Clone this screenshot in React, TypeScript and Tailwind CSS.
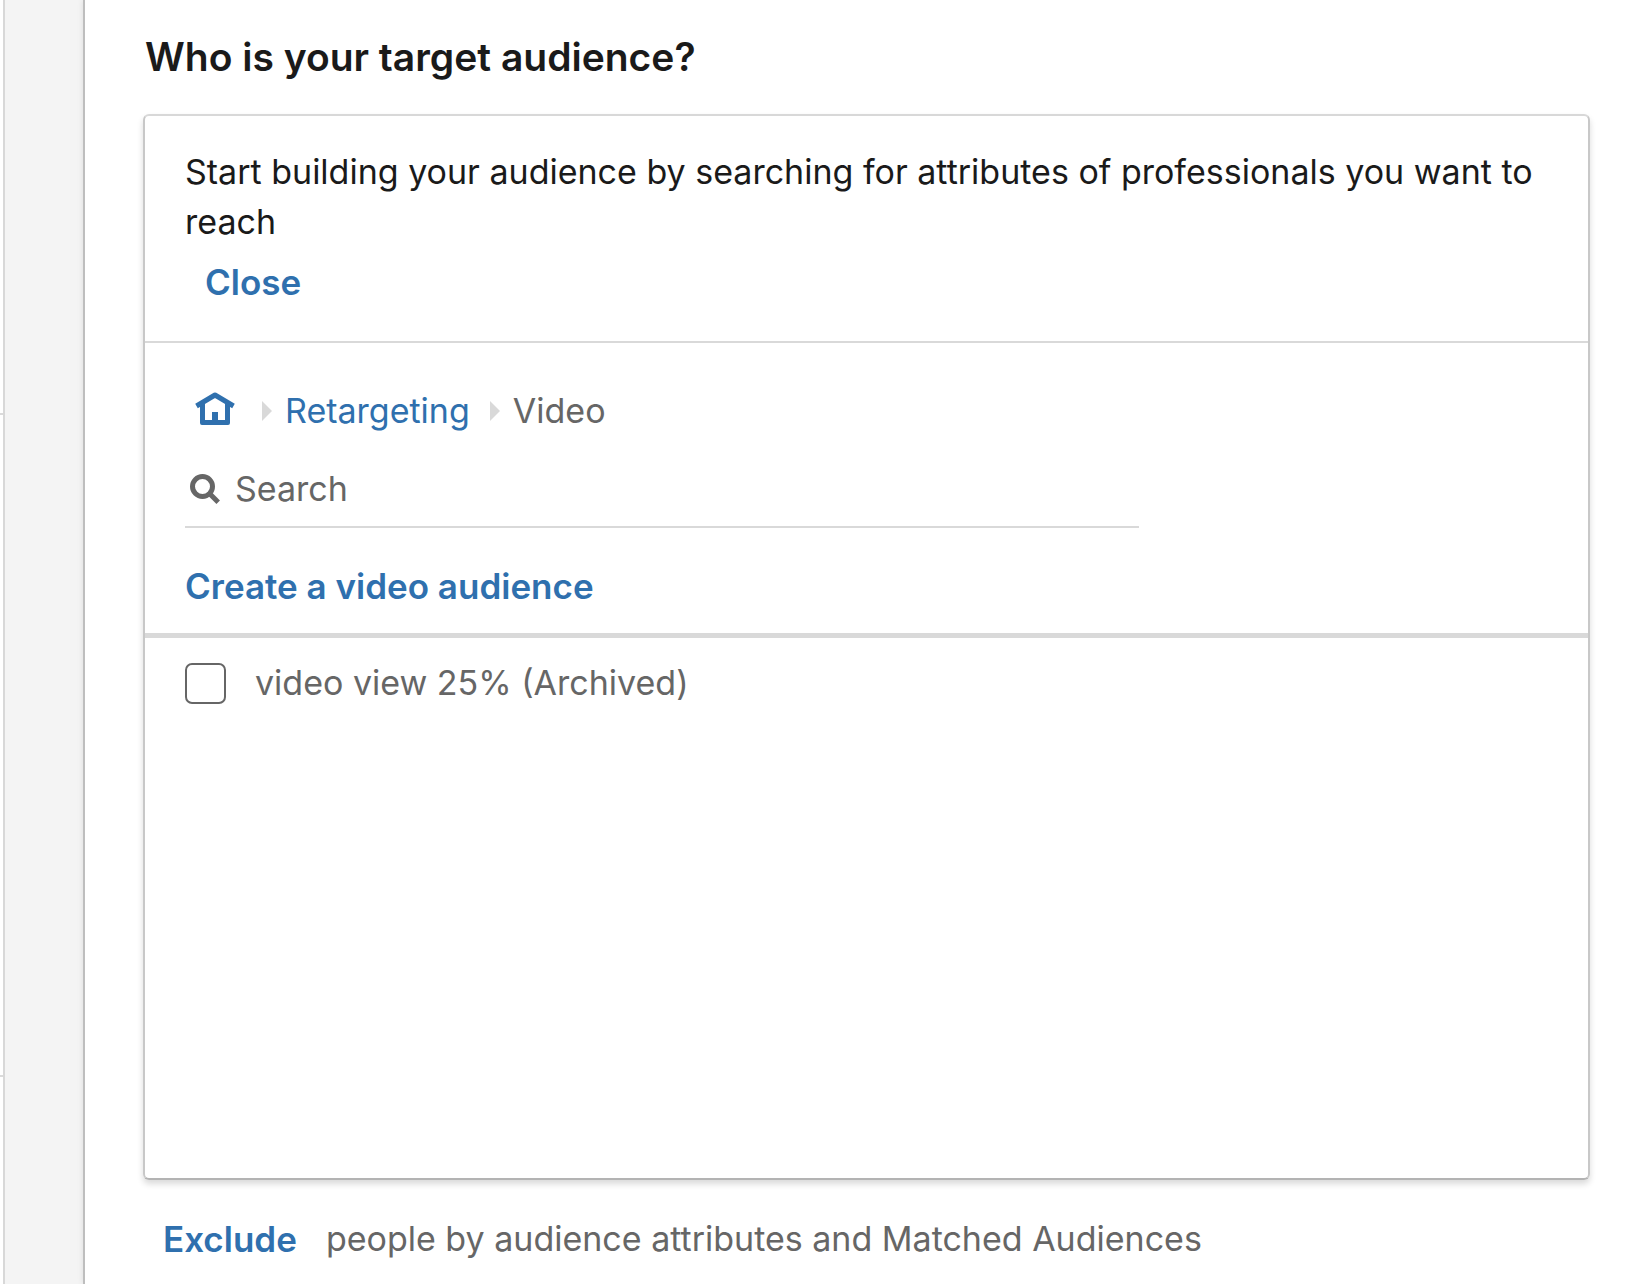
import React, { useState } from "react";

function HomeIcon() {
  return (
    <svg className="h-[34px] w-[40px] text-[#2f70ae]" viewBox="0 0 40 34" fill="none" aria-hidden="true">
      <path d="M5 12V31Q5 33 7 33H33Q35 33 35 31V12L30 9V28H23V20H17V28H10V9Z" fill="currentColor" />
      <path d="M1.500 14L20 3L38.500 14" stroke="currentColor" strokeWidth="5" strokeLinejoin="round" />
    </svg>
  );
}

function SearchIcon() {
  return (
    <svg className="h-[30px] w-[30px] shrink-0 text-[#666666]" viewBox="0 0 30 30" fill="none" aria-hidden="true">
      <circle cx="12.500" cy="12.500" r="10" stroke="currentColor" strokeWidth="5" />
      <path d="M19.500 19.500L28.200 28.200" stroke="currentColor" strokeWidth="5" />
    </svg>
  );
}

function Separator() {
  return (
    <svg className="h-[20px] w-[10px]" viewBox="0 0 10 20" aria-hidden="true">
      <path d="M0 0L10 10L0 20Z" fill="#d9d9d9" />
    </svg>
  );
}

export default function App() {
  const [query, setQuery] = useState("");
  const [checked, setChecked] = useState(false);

  return (
    <div className="flex min-h-screen bg-[#f4f4f4] font-['Inter',sans-serif] text-[34px] leading-[50px] text-[#666666]">
      <aside className="flex w-[5px] shrink-0 flex-col border-r-2 border-[#d8d8d8] bg-white">
        <div className="h-[415px] border-b-2 border-[#dadada]" />
        <div className="h-[662px] border-b-2 border-[#dadada]" />
      </aside>

      <main className="ml-[78px] min-w-0 flex-1 border-l-2 border-[#bebebe] bg-white px-[58px] pt-[32px] shadow-[0_0_6px_rgba(0,0,0,0.1)]">
        <h1 className="pl-[2px] text-[39px] font-semibold text-[#1a1a1a]">Who is your target audience?</h1>

        <section className="mt-[32px] rounded-[6px] border-2 border-x-[#c8c8c8] border-t-[#d8d8d8] border-b-[#b3b3b3] shadow-[0_4px_6px_rgba(0,0,0,0.15)]">
          <div className="border-b-2 border-[#d9d9d9] px-10 pt-[31px] pb-[34px] text-[#1a1a1a]">
            <p>Start building your audience by searching for attributes of professionals you want to reach</p>
            <button type="button" className="mt-[10px] block px-5 text-[35px] font-semibold text-[#2f70ae]">
              Close
            </button>
          </div>

          <div className="border-b-[5px] border-[#d9d9d9] px-10 pt-[43px] pb-[22px]">
            <nav aria-label="Breadcrumb" className="flex items-center pl-[10px]">
              <a href="#home" aria-label="Home" className="mr-[27px] pb-1">
                <HomeIcon />
              </a>
              <Separator />
              <a href="#retargeting" className="mr-5 ml-[13px] text-[#2f70ae]">
                Retargeting
              </a>
              <Separator />
              <span className="ml-[13px]">Video</span>
            </nav>

            <label className="mt-[28px] flex w-[70%] items-center gap-[15px] border-b-2 border-[#d9d9d9] pb-[12px] pl-[5px]">
              <SearchIcon />
              <input
                type="text"
                aria-label="Search"
                placeholder="Search"
                value={query}
                onChange={(e) => setQuery(e.target.value)}
                className="h-[50px] min-w-0 flex-1 bg-transparent outline-none placeholder:text-[#666666]"
              />
            </label>

            <button type="button" className="mt-[33px] block text-[35px] font-semibold text-[#2f70ae]">
              Create a video audience
            </button>
          </div>

          <div className="min-h-[540px] px-10 pt-5">
            <label className="flex items-center gap-[29px]">
              <input
                type="checkbox"
                checked={checked}
                onChange={(e) => setChecked(e.target.checked)}
                className="h-[41px] w-[41px] shrink-0 appearance-none rounded-[7px] border-2 border-[#666666] bg-white checked:bg-[#2f70ae]"
              />
              <span>video view 25% (Archived)</span>
            </label>
          </div>
        </section>

        <div className="mt-[34px] flex items-center gap-[29px] pl-5">
          <button type="button" className="text-[35px] font-semibold text-[#2f70ae]">
            Exclude
          </button>
          <span>people by audience attributes and Matched Audiences</span>
        </div>
      </main>
    </div>
  );
}
